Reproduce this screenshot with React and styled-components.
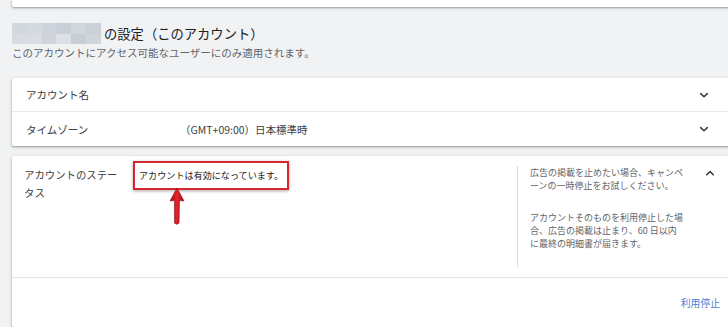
import React from 'react';
import styled, { createGlobalStyle } from 'styled-components';

const GlobalStyle = createGlobalStyle`
  html, body {
    margin: 0;
    padding: 0;
    background: #f1f2f4;
  }
  body {
    font-family: "Noto Sans CJK JP", "Noto Sans", sans-serif;
    color: #3c4043;
    overflow: hidden;
  }
`;

const Page = styled.div`
  width: 728px;
  height: 327px;
  padding-left: 12px;
  box-sizing: border-box;
  overflow: hidden;
`;

const Card = styled.div`
  background: #fff;
  margin-right: -8px;
  margin-top: ${p => p.$top || 0}px;
  border-radius: 2px;
  box-shadow: 0 1px 2px rgba(60, 64, 67, 0.4), 0 1px 3px 1px rgba(60, 64, 67, 0.1);
`;

const TopCard = styled(Card)`
  height: 7px;
  border-radius: 0 0 2px 2px;
`;

const Header = styled.div`
  margin-top: 16px;
`;

const TitleRow = styled.div`
  display: flex;
  align-items: center;
  height: 21px;
  gap: 3px;
`;

const Mosaic = styled.div`
  display: grid;
  grid-template-columns: repeat(6, 1fr);
  grid-template-rows: 1fr 1fr;
  width: 89px;
  height: 21px;
`;

const MosaicCell = styled.span`
  background: ${p => p.$c};
`;

const Title = styled.h1`
  margin: 0;
  font-size: 13.3px;
  font-weight: 400;
  color: #202124;
  line-height: 21px;
`;

const Subtitle = styled.p`
  margin: 2px 0 0;
  font-size: 10.5px;
  line-height: 14px;
  color: #5f6368;
`;

const Row = styled.div`
  display: grid;
  grid-template-columns: 154px 1fr 24px;
  align-items: center;
  height: ${p => p.$h}px;
  padding: 0 20px 0 14px;
  font-size: 10.5px;
  color: #3c4043;
  & + & {
    border-top: 1px solid #e8eaed;
  }
`;

const Chevron = ({ up }) => (
  <svg width="24" height="10" viewBox="0 0 24 10" style={{ display: 'block' }}>
    <path
      d={up ? 'M8.7 6.8 L12 3.6 L15.3 6.8' : 'M8.7 3.6 L12 6.8 L15.3 3.6'}
      fill="none"
      stroke="#3c4043"
      strokeWidth="1.6"
      strokeLinecap="round"
      strokeLinejoin="round"
    />
  </svg>
);

const StatusTop = styled.div`
  display: flex;
  height: 121px;
  padding: 0 14px 0 12px;
  border-bottom: 1px solid #e3e5e8;
`;

const StatusLabel = styled.div`
  width: 97px;
  margin: 10px 12px 0 0;
  font-size: 10.4px;
  line-height: 17.5px;
  color: #3c4043;
`;

const StatusMain = styled.div`
  flex: 1;
  padding-top: 4px;
`;

const Highlight = styled.div`
  position: relative;
  display: inline-flex;
  align-items: center;
  width: 156px;
  height: 29px;
  box-sizing: border-box;
  padding-left: 4px;
  border: 2px solid #d8252e;
  box-shadow: 0 1px 3px rgba(0, 0, 0, 0.35);
  font-size: 9.1px;
  color: #202124;
  white-space: nowrap;
`;

const Arrow = styled.svg`
  position: absolute;
  left: 33px;
  top: 23px;
`;

const Help = styled.div`
  width: 155px;
  height: 101px;
  margin-top: 10px;
  padding-left: 12px;
  border-left: 1px solid #dadce0;
  font-size: 9px;
  line-height: 13px;
  color: #5f6368;
  p {
    margin: 0 0 19px;
  }
`;

const ChevronCell = styled.div`
  display: flex;
  margin: 12px 0 0 13px;
  height: 10px;
`;

const StatusBottom = styled.div`
  display: flex;
  justify-content: flex-end;
  align-items: center;
  height: 49px;
  padding-right: 16px;
`;

const LinkButton = styled.span`
  font-size: 9.8px;
  color: #4a80d8;
`;

const mosaic = [
  '#d3d8de', '#d5dae0', '#cdd3da', '#c9cfd7', '#d2d7de', '#cbd1d8',
  '#d8dce2', '#d9dde3', '#cfd4db', '#dde0e5', '#c8ced6', '#d0d5dc',
];

const App = () => {
  return (
    <>
      <GlobalStyle />
      <Page>
        <TopCard />
        <Header>
          <TitleRow>
            <Mosaic>
              {mosaic.map((c, i) => <MosaicCell key={i} $c={c} />)}
            </Mosaic>
            <Title>の設定（このアカウント）</Title>
          </TitleRow>
          <Subtitle>このアカウントにアクセス可能なユーザーにのみ適用されます。</Subtitle>
        </Header>

        <Card $top={18}>
          <Row $h={33}>
            <span>アカウント名</span>
            <span />
            <Chevron />
          </Row>
          <Row $h={34}>
            <span>タイムゾーン</span>
            <span>（GMT+09:00）日本標準時</span>
            <Chevron />
          </Row>
        </Card>

        <Card $top={10}>
          <StatusTop>
            <StatusLabel>アカウントのステータス</StatusLabel>
            <StatusMain>
              <Highlight>
                アカウントは有効になっています。
                <Arrow width="18" height="42" viewBox="0 0 18 42">
                  <defs>
                    <linearGradient id="arrowFill" x1="0" x2="1" y1="0" y2="0">
                      <stop offset="0" stopColor="#a70d16" />
                      <stop offset="0.5" stopColor="#e3242c" />
                      <stop offset="1" stopColor="#9c0b13" />
                    </linearGradient>
                  </defs>
                  <path
                    d="M9 2 L16 15 L11.5 14.5 L11 37 Q8.5 39.5 6.5 37 L6.5 14.5 L2 15 Z"
                    fill="url(#arrowFill)"
                    stroke="#8a0a10"
                    strokeWidth="0.6"
                    strokeLinejoin="round"
                  />
                </Arrow>
              </Highlight>
            </StatusMain>
            <Help>
              <p>広告の掲載を止めたい場合、キャンペーンの一時停止をお試しください。</p>
              <p>アカウントそのものを利用停止した場合、広告の掲載は止まり、60 日以内に最終の明細書が届きます。</p>
            </Help>
            <ChevronCell>
              <Chevron up />
            </ChevronCell>
          </StatusTop>
          <StatusBottom>
            <LinkButton>利用停止</LinkButton>
          </StatusBottom>
        </Card>
      </Page>
    </>
  );
};

export default App;
